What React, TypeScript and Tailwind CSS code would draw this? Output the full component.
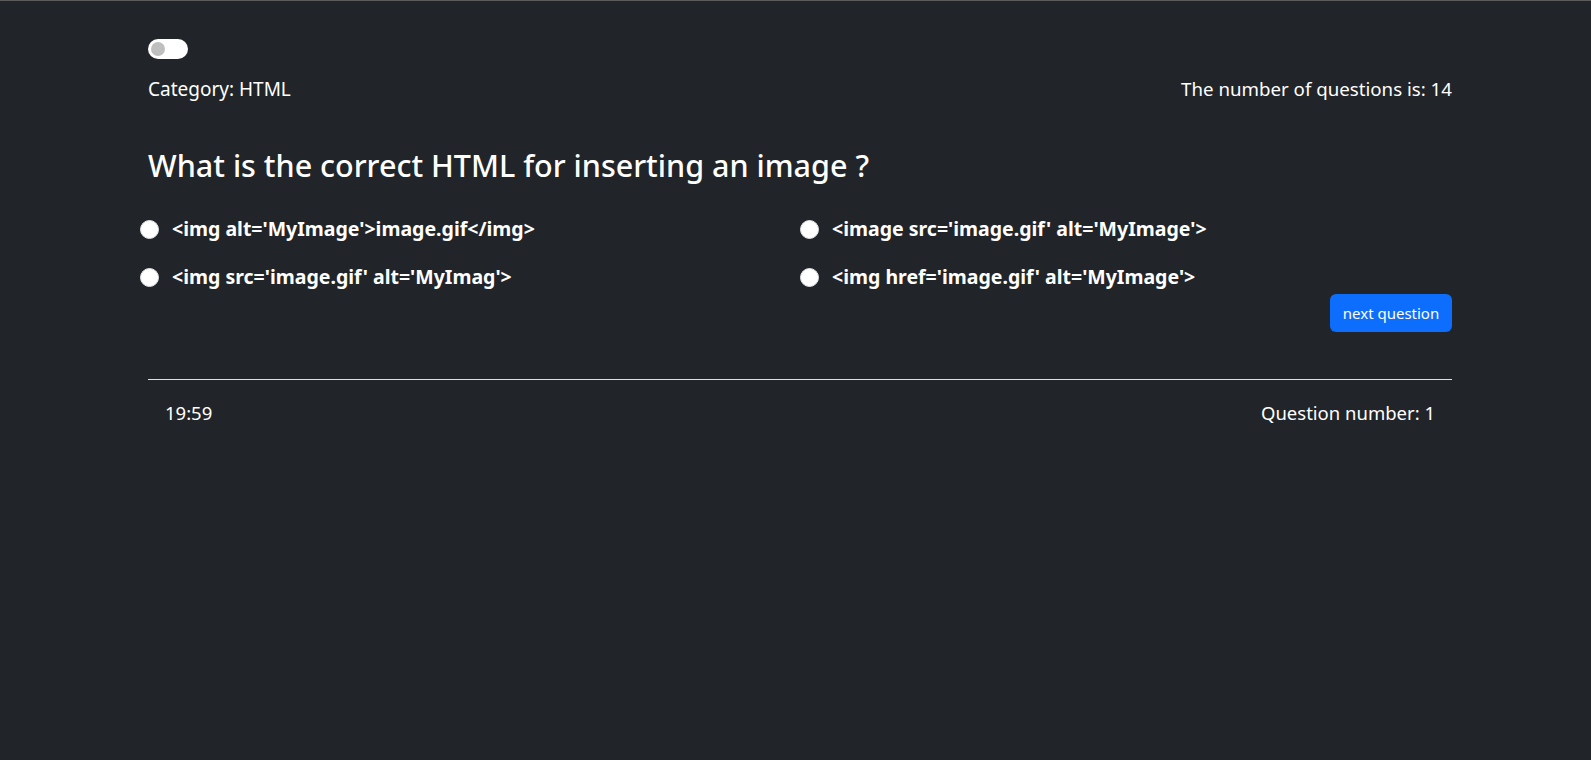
import { useState } from "react";

const options = [
    "<img alt='MyImage'>image.gif</img>",
    "<image src='image.gif' alt='MyImage'>",
    "<img src='image.gif' alt='MyImag'>",
    "<img href='image.gif' alt='MyImage'>",
]

const App = () => {
    const [dark, setDark] = useState(false)
    const [selected, setSelected] = useState<string | null>(null)

    return (
        <div className="min-h-[760px] bg-[#212529] text-white border-t border-[#5c5c5c]" style={{ fontFamily: '"Noto Sans", "Open Sans", sans-serif' }}>
            <div className="ml-[148px] w-[1304px] pt-[38px]">
                <button
                    onClick={() => setDark(!dark)}
                    className="w-[40px] h-[20px] rounded-full bg-white flex items-center px-[3px]"
                >
                    <span className={`w-[14px] h-[14px] rounded-full bg-[#bfbfbf] ${dark ? "ml-auto" : ""}`}></span>
                </button>

                <div className="flex justify-between mt-[18px] text-[19px] leading-[24px]">
                    <div>Category: HTML</div>
                    <div className="text-[18.7px]">The number of questions is: 14</div>
                </div>

                <h3 className="text-[30.5px] leading-[34px] font-medium mt-[47px]">What is the correct HTML for inserting an image ?</h3>

                <div className="grid grid-cols-2 w-[1320px] ml-[-8px] mt-[36px] gap-y-[26px]">
                    {options.map((option) => (
                        <label key={option} className="flex items-center gap-[13px] cursor-pointer select-none">
                            <span className="w-[19px] h-[19px] rounded-full bg-white border border-[#dee2e6] flex items-center justify-center">
                                {selected === option && <span className="w-[8px] h-[8px] rounded-full bg-[#0d6efd]"></span>}
                            </span>
                            <input type="radio" className="hidden" checked={selected === option} onChange={() => setSelected(option)} />
                            <span className="text-[19.5px] leading-[22px] font-bold">{option}</span>
                        </label>
                    ))}
                </div>

                <div className="flex justify-end mt-[6px]">
                    <button className="bg-[#0d6efd] hover:bg-[#0b5ed7] rounded-[6px] h-[38px] w-[122px] text-[15px]">next question</button>
                </div>

                <hr className="border-t border-[#dee2e6] mt-[47px]" />

                <div className="flex justify-between px-[17px] mt-[21px] text-[18.5px] leading-[24px]">
                    <div>19:59</div>
                    <div>Question number: 1</div>
                </div>
            </div>
        </div>
    )
}

export default App
